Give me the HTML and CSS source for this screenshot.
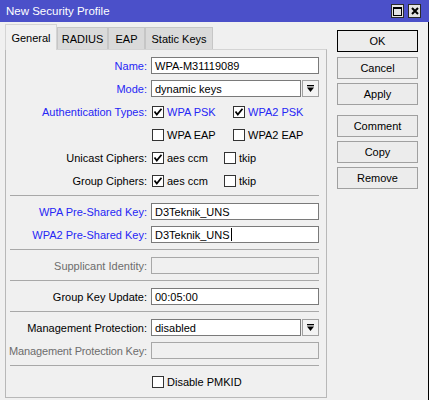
FILE: index.html
```html
<!DOCTYPE html>
<html>
<head>
<meta charset="utf-8">
<link rel="stylesheet" href="styles.css">
</head>
<body>
<div class="window">
  <div class="titlebar">
    <span class="title">New Security Profile</span>
    <div class="wbtns">
      <span class="wbtn"><svg width="9" height="9" viewBox="0 0 9 9"><rect x="0.5" y="0.5" width="8" height="8" fill="none" stroke="#000" stroke-width="1"/><rect x="0" y="0" width="9" height="2" fill="#000"/></svg></span>
      <span class="wbtn"><svg width="8" height="8" viewBox="0 0 8 8"><path d="M1 1 L7 7 M7 1 L1 7" stroke="#000" stroke-width="2"/></svg></span>
    </div>
  </div>
  <div class="main">
    <div class="left">
      <div class="tabs">
        <div class="tab active w-general">General</div>
        <div class="tab w-radius">RADIUS</div>
        <div class="tab w-eap">EAP</div>
        <div class="tab w-static">Static Keys</div>
      </div>
      <div class="panel">
        <div class="row">
          <div class="lbl blue">Name:</div>
          <div class="inp">WPA-M31119089</div>
        </div>
        <div class="row">
          <div class="lbl blue">Mode:</div>
          <div class="inp">dynamic keys</div>
          <div class="ddbtn"><svg width="7" height="7" viewBox="0 0 7 7"><rect x="0" y="0" width="7" height="1.3" fill="#000"/><polygon points="0,2.5 7,2.5 3.5,7" fill="#000"/></svg></div>
        </div>
        <div class="row">
          <div class="lbl blue">Authentication Types:</div>
          <div class="cbs">
            <div class="cb w-auth"><span class="box"><svg width="10" height="10" viewBox="0 0 10 10"><path d="M1.5 4.5 L3.8 7.5 L8.5 1.8" fill="none" stroke="#000" stroke-width="1.8"/></svg></span><span class="blue">WPA PSK</span></div>
            <div class="cb"><span class="box"><svg width="10" height="10" viewBox="0 0 10 10"><path d="M1.5 4.5 L3.8 7.5 L8.5 1.8" fill="none" stroke="#000" stroke-width="1.8"/></svg></span><span class="blue">WPA2 PSK</span></div>
          </div>
        </div>
        <div class="row">
          <div class="lbl"></div>
          <div class="cbs">
            <div class="cb w-auth"><span class="box"></span><span>WPA EAP</span></div>
            <div class="cb"><span class="box"></span><span>WPA2 EAP</span></div>
          </div>
        </div>
        <div class="row">
          <div class="lbl">Unicast Ciphers:</div>
          <div class="cbs">
            <div class="cb w-ciph"><span class="box"><svg width="10" height="10" viewBox="0 0 10 10"><path d="M1.5 4.5 L3.8 7.5 L8.5 1.8" fill="none" stroke="#000" stroke-width="1.8"/></svg></span><span>aes ccm</span></div>
            <div class="cb"><span class="box"></span><span>tkip</span></div>
          </div>
        </div>
        <div class="row">
          <div class="lbl">Group Ciphers:</div>
          <div class="cbs">
            <div class="cb w-ciph"><span class="box"><svg width="10" height="10" viewBox="0 0 10 10"><path d="M1.5 4.5 L3.8 7.5 L8.5 1.8" fill="none" stroke="#000" stroke-width="1.8"/></svg></span><span>aes ccm</span></div>
            <div class="cb"><span class="box"></span><span>tkip</span></div>
          </div>
        </div>
        <div class="sep"></div>
        <div class="row">
          <div class="lbl blue">WPA Pre-Shared Key:</div>
          <div class="inp">D3Teknik_UNS</div>
        </div>
        <div class="row">
          <div class="lbl blue">WPA2 Pre-Shared Key:</div>
          <div class="inp">D3Teknik_UNS<span class="caret"></span></div>
        </div>
        <div class="sep"></div>
        <div class="row">
          <div class="lbl gray">Supplicant Identity:</div>
          <div class="inp disabled"></div>
        </div>
        <div class="sep"></div>
        <div class="row">
          <div class="lbl">Group Key Update:</div>
          <div class="inp">00:05:00</div>
        </div>
        <div class="sep"></div>
        <div class="row">
          <div class="lbl">Management Protection:</div>
          <div class="inp">disabled</div>
          <div class="ddbtn"><svg width="7" height="7" viewBox="0 0 7 7"><rect x="0" y="0" width="7" height="1.3" fill="#000"/><polygon points="0,2.5 7,2.5 3.5,7" fill="#000"/></svg></div>
        </div>
        <div class="row">
          <div class="lbl gray narrow">Management Protection Key:</div>
          <div class="inp disabled"></div>
        </div>
        <div class="sep"></div>
        <div class="row">
          <div class="lbl"></div>
          <div class="cbs">
            <div class="cb"><span class="box"></span><span>Disable PMKID</span></div>
          </div>
        </div>
      </div>
    </div>
    <div class="buttons">
      <div class="btn default">OK</div>
      <div class="btn b-cancel">Cancel</div>
      <div class="btn b-apply">Apply</div>
      <div class="btn b-comment">Comment</div>
      <div class="btn b-copy">Copy</div>
      <div class="btn b-remove">Remove</div>
    </div>
  </div>
</div>
</body>
</html>
```

FILE: styles.css
```css
* { box-sizing: border-box; }
body {
  margin: 0;
  background: #f0f0f0;
  font-family: "Liberation Sans", Arial, sans-serif;
  font-size: 11px;
  color: #000;
}
.window {
  width: 429px;
  height: 400px;
  display: flex;
  flex-direction: column;
}
.titlebar {
  height: 22px;
  flex: none;
  background: #4b50c9;
  color: #fff;
  display: flex;
  align-items: center;
  justify-content: space-between;
  padding: 0 8px 0 6px;
  font-size: 11.5px;
}
.wbtns { display: flex; gap: 4px; }
.wbtn {
  width: 13px;
  height: 14px;
  background: #e4e4e4;
  border: 1px solid #2b2b2b;
  display: flex;
  align-items: center;
  justify-content: center;
}
.main {
  flex: 1;
  display: flex;
  border-right: 1px solid #000;
  padding: 2px 0 0 5px;
}
.left {
  width: 322px;
  display: flex;
  flex-direction: column;
}
.tabs {
  display: flex;
  align-items: flex-end;
  height: 25px;
}
.tab {
  height: 22px;
  border: 1px solid #c6c6c6;
  border-bottom: none;
  background: #dadada;
  display: flex;
  align-items: center;
  justify-content: center;
  padding-top: 1px;
}
.tab.active {
  height: 26px;
  background: #f0f0f0;
  border-color: #d4d4d4;
  margin-bottom: -1px;
  position: relative;
  z-index: 1;
  padding-top: 0;
}
.w-general { width: 52px; }
.w-radius { width: 51px; }
.w-eap { width: 37px; }
.w-static { width: 68px; }
.panel {
  height: 349px;
  border: 1px solid #b8b8b8;
  border-top-color: #d4d4d4;
  padding: 7px 7px 0 0;
  display: flex;
  flex-direction: column;
}
.row {
  display: flex;
  align-items: center;
  height: 17px;
  margin-bottom: 6px;
  flex: none;
}
.lbl {
  width: 145px;
  flex: none;
  text-align: right;
  padding-right: 4px;
  white-space: nowrap;
}
.lbl.narrow { letter-spacing: -0.15px; }
.blue { color: #2626f5; }
.gray { color: #6d6d6d; }
.inp {
  flex: 1;
  height: 17px;
  border: 1px solid #7a7a7a;
  background: #fff;
  padding: 0 3px;
  display: flex;
  align-items: center;
  white-space: nowrap;
}
.inp.disabled {
  background: #f0f0f0;
  border-color: #a8a8a8;
}
.caret {
  display: inline-block;
  width: 1px;
  height: 13px;
  background: #000;
  margin-left: 1px;
}
.ddbtn {
  width: 17px;
  height: 17px;
  flex: none;
  margin-left: 1px;
  border: 1px solid #a0a0a0;
  background: #f3f3f3;
  display: flex;
  align-items: center;
  justify-content: center;
}
.cbs {
  display: flex;
  align-items: center;
  padding-left: 1px;
}
.cb {
  display: flex;
  align-items: center;
  gap: 3px;
}
.w-auth { width: 81px; }
.w-ciph { width: 72px; }
.box {
  width: 12px;
  height: 12px;
  border: 1px solid #333;
  background: #fff;
  display: flex;
  align-items: center;
  justify-content: center;
}
.sep {
  height: 1px;
  background: #a8a8a8;
  margin: 0 0 7px 4px;
  flex: none;
}
.buttons {
  width: 81px;
  margin-left: 10px;
  padding-top: 6px;
  display: flex;
  flex-direction: column;
}
.btn {
  height: 22px;
  border: 1px solid #a0a0a0;
  background: #ececec;
  display: flex;
  align-items: center;
  justify-content: center;
}
.btn.default { border-color: #000; }
.b-cancel { margin-top: 5px; }
.b-apply { margin-top: 4px; }
.b-comment { margin-top: 10px; }
.b-copy { margin-top: 4px; }
.b-remove { margin-top: 4px; }
```
